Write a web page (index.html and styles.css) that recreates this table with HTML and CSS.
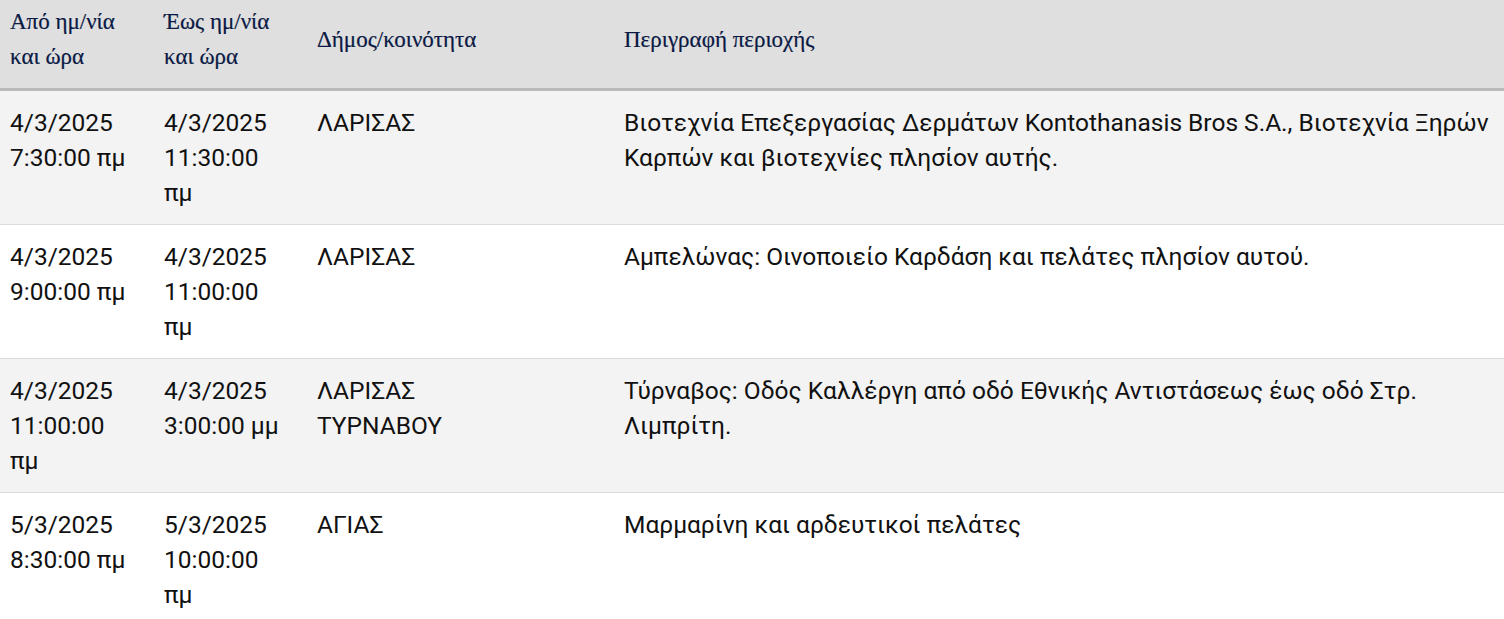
FILE: index.html
```html
<!DOCTYPE html>
<html lang="el">

<head>
    <meta charset="UTF-8">
    <meta name="viewport" content="width=device-width, initial-scale=1.0">
    <title>Διακοπές ρεύματος</title>
    <link rel="stylesheet" href="styles.css">
</head>

<body>
    <table class="outages">
        <colgroup>
            <col class="col-from">
            <col class="col-to">
            <col class="col-area">
            <col class="col-desc">
        </colgroup>
        <thead>
            <tr>
                <th>Από ημ/νία και ώρα</th>
                <th>Έως ημ/νία και ώρα</th>
                <th>Δήμος/κοινότητα</th>
                <th>Περιγραφή περιοχής</th>
            </tr>
        </thead>
        <tbody>
            <tr>
                <td>4/3/2025 7:30:00 πμ</td>
                <td>4/3/2025 11:30:00 πμ</td>
                <td>ΛΑΡΙΣΑΣ</td>
                <td>Βιοτεχνία Επεξεργασίας Δερμάτων Kontothanasis Bros S.A., Βιοτεχνία Ξηρών Καρπών και βιοτεχνίες πλησίον αυτής.</td>
            </tr>
            <tr>
                <td>4/3/2025 9:00:00 πμ</td>
                <td>4/3/2025 11:00:00 πμ</td>
                <td>ΛΑΡΙΣΑΣ</td>
                <td>Αμπελώνας: Οινοποιείο Καρδάση και πελάτες πλησίον αυτού.</td>
            </tr>
            <tr>
                <td>4/3/2025 11:00:00 πμ</td>
                <td>4/3/2025 3:00:00 μμ</td>
                <td>ΛΑΡΙΣΑΣ<br>ΤΥΡΝΑΒΟΥ</td>
                <td>Τύρναβος: Οδός Καλλέργη από οδό Εθνικής Αντιστάσεως έως οδό Στρ. Λιμπρίτη.</td>
            </tr>
            <tr>
                <td>5/3/2025 8:30:00 πμ</td>
                <td>5/3/2025 10:00:00 πμ</td>
                <td>ΑΓΙΑΣ</td>
                <td>Μαρμαρίνη και αρδευτικοί πελάτες</td>
            </tr>
        </tbody>
    </table>
</body>

</html>
```

FILE: styles.css
```css
body {
    margin: 0;
    background-color: #fff;
}

.outages {
    width: 100%;
    border-collapse: collapse;
    table-layout: fixed;
}

.col-from {
    width: 154px;
}

.col-to {
    width: 153px;
}

.col-area {
    width: 307px;
}

.outages th {
    background-color: #dfdfdf;
    color: #0a1944;
    font-family: "Liberation Serif", "Times New Roman", serif;
    font-size: 23px;
    font-weight: normal;
    line-height: 35px;
    text-align: left;
    vertical-align: middle;
    padding: 4px 16px 14px 10px;
    border-bottom: 3px solid #bababa;
    -webkit-text-stroke: 0.2px #0a1944;
}

.outages td {
    color: #111;
    font-family: Roboto, "Noto Sans", sans-serif;
    font-size: 24.5px;
    line-height: 35px;
    vertical-align: top;
    padding: 14px 16px 14px 10px;
    border-bottom: 1px solid #dcdcdc;
}

/* description column runs almost to the edge */
.outages td:last-child {
    padding-right: 4px;
}

.outages tbody tr:nth-child(odd) {
    background-color: #f3f3f3;
}
```
